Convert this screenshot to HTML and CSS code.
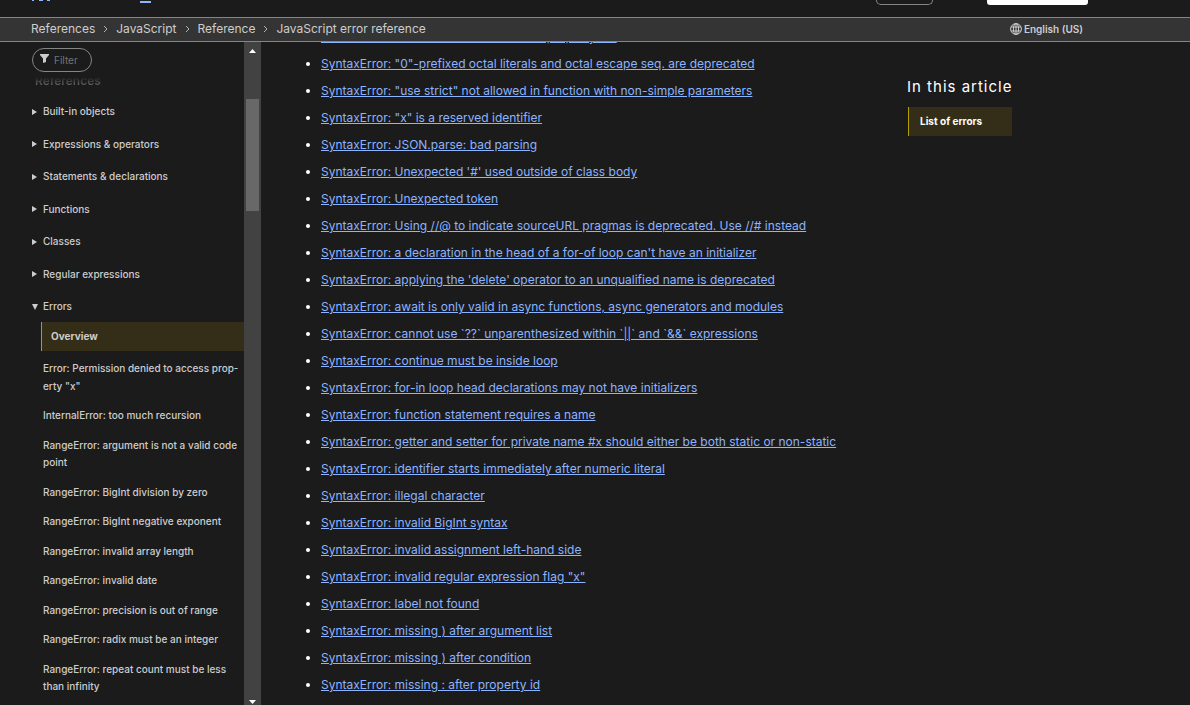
FILE: index.html
```html
<!DOCTYPE html>
<html lang="en-US">
<head>
<meta charset="utf-8">
<title>JavaScript error reference</title>
<link rel="stylesheet" href="styles.css">
</head>
<body>
<header class="topbar">
  <a class="logo" href="#" aria-label="Home"><svg width="20" height="1" viewBox="0 0 20 1"><path d="M0 0h2v1H0zM7 0h4v1H7zM15 0h3v1h-3z" fill="#8cb4ff"/></svg></a>
  <span class="mark"></span>
  <button class="btn-outline" type="button" aria-label="Log in"></button>
  <button class="btn-solid" type="button" aria-label="Sign up"></button>
</header>
<div class="crumbbar">
  <nav aria-label="Breadcrumb">
    <ol class="crumbs">
      <li><a href="#">References</a><svg width="5" height="8" viewBox="0 0 5 8"><path d="M1 1l3 3-3 3"/></svg></li>
      <li><a href="#">JavaScript</a><svg width="5" height="8" viewBox="0 0 5 8"><path d="M1 1l3 3-3 3"/></svg></li>
      <li><a href="#">Reference</a><svg width="5" height="8" viewBox="0 0 5 8"><path d="M1 1l3 3-3 3"/></svg></li>
      <li><a href="#">JavaScript error reference</a></li>
    </ol>
  </nav>
  <button class="lang" type="button"><svg width="12" height="12" viewBox="0 0 12 12"><circle cx="6" cy="6" r="5.4"/><ellipse cx="6" cy="6" rx="2.6" ry="5.4"/><path d="M6 .6v10.8M1.200 4h9.600M1.200 8h9.600"/></svg>English (US)</button>
</div>
<div class="page">
  <aside class="sidebar">
    <div class="side-content">
      <label class="filter">
        <svg width="9" height="9" viewBox="0 0 9 9"><path d="M0 0h9v1L6 4.500V8L3 9V4.500L0 1z" fill="#ccc"/></svg>
        <input type="text" placeholder="Filter" aria-label="Filter">
      </label>
      <div class="side-title"><h2>References</h2></div>
      <ul class="tree">
        <li><a href="#">Built-in objects</a></li>
        <li><a href="#">Expressions &amp; operators</a></li>
        <li><a href="#">Statements &amp; declarations</a></li>
        <li><a href="#">Functions</a></li>
        <li><a href="#">Classes</a></li>
        <li><a href="#">Regular expressions</a></li>
        <li class="open"><a href="#">Errors</a></li>
      </ul>
      <a class="current" href="#" aria-current="page">Overview</a>
      <ul class="subtree">
        <li><a href="#">Error: Permission denied to access prop&shy;erty "x"</a></li>
        <li><a href="#">InternalError: too much recursion</a></li>
        <li><a href="#">RangeError: argument is not a valid code point</a></li>
        <li><a href="#">RangeError: BigInt division by zero</a></li>
        <li><a href="#">RangeError: BigInt negative exponent</a></li>
        <li><a href="#">RangeError: invalid array length</a></li>
        <li><a href="#">RangeError: invalid date</a></li>
        <li><a href="#">RangeError: precision is out of range</a></li>
        <li><a href="#">RangeError: radix must be an integer</a></li>
        <li><a href="#">RangeError: repeat count must be less than infinity</a></li>
      </ul>
    </div>
    <div class="scrollbar" aria-hidden="true">
      <svg width="7" height="4" viewBox="0 0 7 4"><path d="M0 4L3.500 0L7 4z" fill="#fff"/></svg>
      <div class="thumb"></div>
      <svg width="7" height="4" viewBox="0 0 7 4"><path d="M0 0h7L3.500 4z" fill="#fff"/></svg>
    </div>
  </aside>
  <main class="content">
    <ul class="errors">
      <li><a href="#">ReferenceError: reference to undefined property "x"</a></li>
      <li><a href="#">SyntaxError: "0"-prefixed octal literals and octal escape seq. are deprecated</a></li>
      <li><a href="#">SyntaxError: "use strict" not allowed in function with non-simple parameters</a></li>
      <li><a href="#">SyntaxError: "x" is a reserved identifier</a></li>
      <li><a href="#">SyntaxError: JSON.parse: bad parsing</a></li>
      <li><a href="#">SyntaxError: Unexpected '#' used outside of class body</a></li>
      <li><a href="#">SyntaxError: Unexpected token</a></li>
      <li><a href="#">SyntaxError: Using //@ to indicate sourceURL pragmas is deprecated. Use //# instead</a></li>
      <li><a href="#">SyntaxError: a declaration in the head of a for-of loop can't have an initializer</a></li>
      <li><a href="#">SyntaxError: applying the 'delete' operator to an unqualified name is deprecated</a></li>
      <li><a href="#">SyntaxError: await is only valid in async functions, async generators and modules</a></li>
      <li><a href="#">SyntaxError: cannot use `??` unparenthesized within `||` and `&amp;&amp;` expressions</a></li>
      <li><a href="#">SyntaxError: continue must be inside loop</a></li>
      <li><a href="#">SyntaxError: for-in loop head declarations may not have initializers</a></li>
      <li><a href="#">SyntaxError: function statement requires a name</a></li>
      <li><a href="#">SyntaxError: getter and setter for private name #x should either be both static or non-static</a></li>
      <li><a href="#">SyntaxError: identifier starts immediately after numeric literal</a></li>
      <li><a href="#">SyntaxError: illegal character</a></li>
      <li><a href="#">SyntaxError: invalid BigInt syntax</a></li>
      <li><a href="#">SyntaxError: invalid assignment left-hand side</a></li>
      <li><a href="#">SyntaxError: invalid regular expression flag "x"</a></li>
      <li><a href="#">SyntaxError: label not found</a></li>
      <li><a href="#">SyntaxError: missing ) after argument list</a></li>
      <li><a href="#">SyntaxError: missing ) after condition</a></li>
      <li><a href="#">SyntaxError: missing : after property id</a></li>
    </ul>
  </main>
  <aside class="toc">
    <h2>In this article</h2>
    <a href="#">List of errors</a>
  </aside>
</div>
</body>
</html>
```
FILE: styles.css
```css
* { box-sizing: border-box; }
body {
  margin: 0;
  height: 100vh;
  display: flex;
  flex-direction: column;
  overflow: hidden;
  background: #1b1b1b;
  color: #cdcdcd;
  font-family: Inter, "Liberation Sans", sans-serif;
  font-size: 12px;
}
a { color: inherit; text-decoration: none; }
ul, ol { list-style: none; margin: 0; padding: 0; }
h2 { margin: 0; }
svg { display: block; flex: none; }

.topbar {
  height: 17px;
  flex: none;
  display: flex;
  align-items: flex-start;
  padding: 0 102px 0 32px;
}
.logo { width: 108px; }
.mark { width: 11px; height: 3px; border-bottom: 2px solid #8cb4ff; }
.btn-outline {
  width: 57px;
  height: 5px;
  margin-left: auto;
  padding: 0;
  background: none;
  border: 1px solid #858585;
  border-top: 0;
  border-radius: 0 0 16px 16px;
}
.btn-solid {
  width: 101px;
  height: 5px;
  margin-left: 54px;
  padding: 0;
  background: #fff;
  border: 0;
  border-radius: 0 0 3px 3px;
}

.crumbbar {
  height: 25px;
  flex: none;
  display: flex;
  align-items: center;
  justify-content: space-between;
  padding: 0 107px 1px 31px;
  background: #343434;
  border: solid #858585;
  border-width: 1px 0;
}
.crumbs { display: flex; gap: 8px; line-height: 20px; }
.crumbs li { display: flex; align-items: center; gap: 8px; }
.crumbs path { fill: none; stroke: #b3b3b3; }
.lang {
  display: flex;
  align-items: center;
  gap: 2px;
  padding: 0;
  border: 0;
  background: none;
  color: #cdcdcd;
  font: 600 10px/20px Inter, "Liberation Sans", sans-serif;
}
.lang svg { fill: none; stroke: #cdcdcd; }

.page { flex: 1; min-height: 0; display: flex; }
.sidebar {
  width: 261px;
  flex: none;
  display: flex;
  font-size: 10px;
  line-height: 1.75;
  font-weight: 500;
  overflow: hidden;
}
.side-content { flex: 1; padding-top: 6px; }
.filter {
  display: flex;
  align-items: center;
  gap: 5px;
  width: 60px;
  height: 24px;
  margin-left: 32px;
  padding: 0 7px;
  border: 1px solid #858585;
  border-radius: 12px;
}
.filter svg { margin-bottom: 3px; }
.filter input {
  width: 100%;
  min-width: 0;
  padding: 0;
  border: 0;
  background: none;
  color: #cdcdcd;
  font: 10px/16px Inter, "Liberation Sans", sans-serif;
}
.filter input::placeholder { color: #757575; opacity: 1; }
.side-title { display: flex; align-items: flex-start; height: 18px; margin: 5px 0 0 35px; }
.side-title h2 {
  margin-top: -6px;
  font-size: 12px;
  line-height: 20px;
  font-weight: 600;
  color: transparent;
  background: linear-gradient(#1b1b1b 30%, #6a6a6a 75%);
  background-clip: text;
}
.tree li { padding: 8px 0 7px 32px; display: flex; align-items: center; gap: 6px; }
.tree li::before {
  content: "";
  border: solid transparent;
  border-width: 3px 0 3px 5px;
  border-left-color: #cdcdcd;
}
.tree .open::before {
  border-color: #cdcdcd transparent transparent;
  border-width: 6px 3px 0;
}
.tree .open { gap: 5px; padding-bottom: 6px; }
.current {
  display: block;
  margin-left: 41px;
  padding: 6px 9px;
  background: #342e18;
  border-left: 1px solid #b3a000;
  font-weight: 700;
}
.subtree { padding: 3px 0 0 43px; }
.subtree li { padding: 6px 0; margin-right: 4px; }
.scrollbar {
  width: 17px;
  display: flex;
  flex-direction: column;
  align-items: center;
  background: #424242;
  padding: 7px 0 1px;
}
.thumb { width: 13px; height: 112px; margin: 46px 0 auto; background: #686868; }

.content { flex: 1; overflow: hidden; padding-left: 60px; }
.errors { margin-top: -16px; list-style: disc; color: #fff; }
.errors li { line-height: 21px; padding-bottom: 6px; }
.errors a { color: #8cb4ff; text-decoration: underline; }

.toc { width: 283px; flex: none; padding-top: 35px; }
.toc h2 {
  font-size: 15px;
  line-height: 20px;
  font-weight: 400;
  letter-spacing: 1px;
  color: #fff;
}
.toc a {
  display: block;
  width: 104px;
  margin: 10px 0 0 1px;
  padding: 5px 11px 6px;
  background: #342e18;
  border-left: 1px solid #b3a000;
  color: #fff;
  font-size: 10px;
  line-height: 18px;
  font-weight: 700;
}
```
